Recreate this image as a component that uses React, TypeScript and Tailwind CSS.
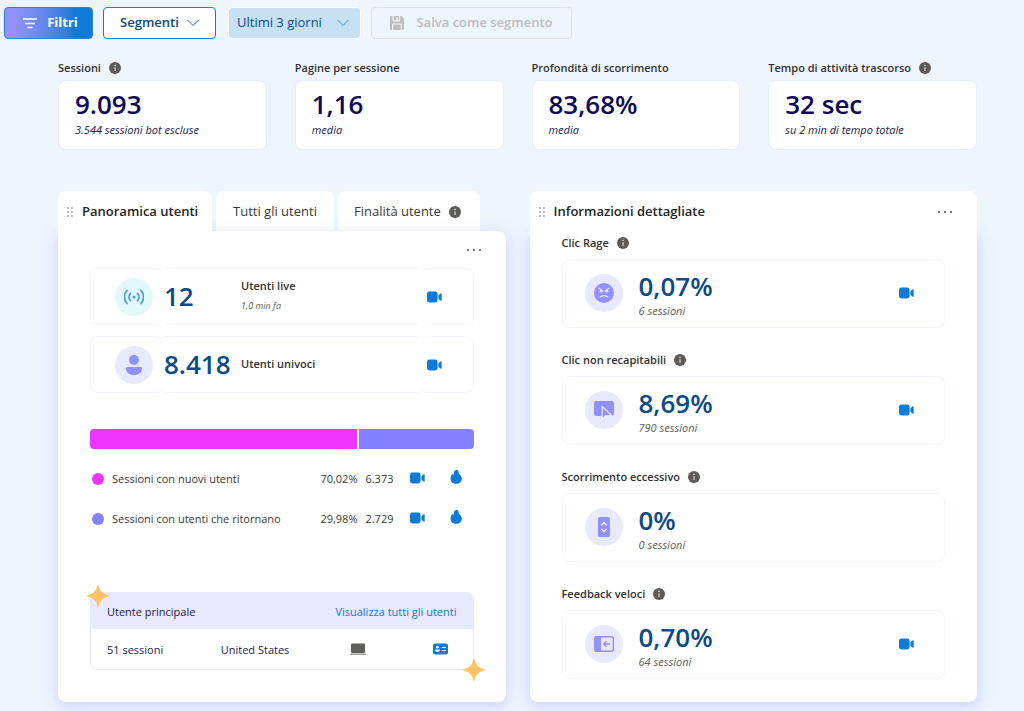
import type { ReactNode } from "react";
import { clsx } from "clsx";

const METRICS = [
  { label: "Sessioni", value: "9.093", note: "3.544 sessioni bot escluse", info: true },
  { label: "Pagine per sessione", value: "1,16", note: "media", info: false },
  { label: "Profondità di scorrimento", value: "83,68%", note: "media", info: false },
  { label: "Tempo di attività trascorso", value: "32 sec", note: "su 2 min di tempo totale", info: true },
];

const SESSION_SPLIT = [
  { label: "Sessioni con nuovi utenti", share: 70.02, count: "6.373", color: "bg-[#ee35ff]" },
  { label: "Sessioni con utenti che ritornano", share: 29.98, count: "2.729", color: "bg-[#8480ff]" },
];

const INSIGHTS = [
  { label: "Clic Rage", value: "0,07%", note: "6 sessioni", icon: <RageIcon />, video: true },
  { label: "Clic non recapitabili", value: "8,69%", note: "790 sessioni", icon: <DeadClickIcon />, video: true },
  { label: "Scorrimento eccessivo", value: "0%", note: "0 sessioni", icon: <ScrollIcon />, video: false },
  { label: "Feedback veloci", value: "0,70%", note: "64 sessioni", icon: <QuickBackIcon />, video: true },
];

function fmtPct(n: number) {
  return `${n.toFixed(2).replace(".", ",")}%`;
}

function InfoIcon() {
  return (
    <svg viewBox="0 0 12 12" className="size-3 shrink-0" aria-hidden="true">
      <circle cx="6" cy="6" r="6" fill="#5d5a58" />
      <circle cx="6" cy="3.4" r="0.8" fill="#d8d8d8" />
      <path d="M6 5.2v3.8" stroke="#d8d8d8" strokeWidth="1.2" />
    </svg>
  );
}

function ChevronDown({ className }: { className?: string }) {
  return (
    <svg viewBox="0 0 12 8" className={clsx("h-2 w-3", className)} fill="none" aria-hidden="true">
      <path d="M0.5 1 6 6.5 11.5 1" stroke="currentColor" strokeWidth="0.9" />
    </svg>
  );
}

function FilterIcon() {
  return (
    <svg viewBox="0 0 14 12" className="h-3 w-3.5" fill="none" aria-hidden="true">
      <path d="M0 2h14M2 6.500h10M4.500 10.500h5" stroke="#fff" strokeWidth="1.500" />
    </svg>
  );
}

function SaveIcon() {
  return (
    <svg viewBox="0 0 14 14" className="size-3.5" aria-hidden="true">
      <path
        fill="currentColor"
        d="M0 1.2C0 .5.5 0 1.2 0H2.6v4.8c0 .5.3.8.8.8h6c.5 0 .8-.3.8-.8V0h1L14 2.6v10.2c0 .7-.5 1.2-1.2 1.2H12V8.4c0-.6-.4-1-1-1H3c-.6 0-1 .4-1 1V14h-.8C.5 14 0 13.5 0 12.8zM4 0h5v4.2H7.8V1H6.4v3.2H4zM3.2 8.6h7.6V14H3.2z"
      />
    </svg>
  );
}

function GripIcon() {
  return (
    <svg viewBox="0 0 8 12" className="h-3 w-2 shrink-0" fill="#bdbbb9" aria-hidden="true">
      {[1, 5, 9].map((y) => (
        <g key={y}>
          <rect x="1" y={y} width="2" height="2" />
          <rect x="5" y={y} width="2" height="2" />
        </g>
      ))}
    </svg>
  );
}

function VideoButton() {
  return (
    <button type="button" aria-label="Registrazioni" className="block shrink-0">
      <svg viewBox="0 0 15 12" className="h-3 w-[15px]" fill="#0f7bd8">
        <rect x="0" y="0.5" width="10.6" height="11" rx="2.4" />
        <path d="M11.4 4.2 13.8 2.3c.4-.3.9-.1.9.4v6.6c0 .5-.5.7-.9.4L11.4 7.8z" />
      </svg>
    </button>
  );
}

function HeatmapButton() {
  return (
    <button type="button" aria-label="Mappa termica" className="block">
      <svg viewBox="0 0 12 16" className="h-4 w-3" fill="#0f7bd8">
        <path d="M6.600.8C8.200 1.200 8.600 2.600 8.900 4.400c.2 1 2.900 2 2.900 5.300 0 3-2.400 5.100-5.700 5.100S.6 12.700.6 9.700c0-1.900.5-3.400 1.300-4.500.3-.4.7-.2.8.2l.4 1.100c.5-.6.500-1.400.700-2.500C4.200 2.300 4.900.9 6.600.8z" />
      </svg>
    </button>
  );
}

function MoreButton() {
  return (
    <button type="button" aria-label="Altre opzioni" className="block">
      <svg viewBox="0 0 16 4" className="h-1 w-4" fill="#7d7b79">
        <rect x="1" y="1" width="2" height="2" />
        <rect x="7" y="1" width="2" height="2" />
        <rect x="13" y="1" width="2" height="2" />
      </svg>
    </button>
  );
}

function LiveIcon() {
  return (
    <svg viewBox="0 0 20 16" className="h-4 w-5" fill="none" stroke="#4ba0e4" strokeWidth="1.8" strokeLinecap="round">
      <circle cx="10" cy="8" r="1.6" fill="#4ba0e4" stroke="none" />
      <path d="M6.4 4.5a5 5 0 0 0 0 7M13.6 4.5a5 5 0 0 1 0 7M3 1.5a9.5 9.5 0 0 0 0 13M17 1.5a9.5 9.5 0 0 1 0 13" />
    </svg>
  );
}

function PersonIcon() {
  return (
    <svg viewBox="0 0 16 20" className="h-5 w-4" fill="#9290fb">
      <circle cx="8" cy="5" r="5" />
      <path d="M1.5 12h13c.8 0 1.500.6 1.500 1.400C16 17.200 12.800 20 8 20s-8-2.800-8-6.600C0 12.600.7 12 1.500 12z" />
    </svg>
  );
}

function RageIcon() {
  return (
    <svg viewBox="0 0 20 20" className="size-5" fill="none">
      <circle cx="10" cy="10" r="10" fill="#9290fb" />
      <path d="M5 5.2 8.8 8M15 5.2 11.2 8M6 14.4c1.800-2.400 6.200-2.400 8 0" stroke="#e8e8ff" strokeWidth="1.2" strokeLinecap="round" />
      <circle cx="7" cy="8.3" r="1.3" fill="#e8e8ff" />
      <circle cx="13" cy="8.3" r="1.3" fill="#e8e8ff" />
    </svg>
  );
}

function DeadClickIcon() {
  return (
    <svg viewBox="0 0 20 18" className="h-[18px] w-5">
      <rect width="20" height="15" rx="2" fill="#9290fb" />
      <path d="M8.200 5.500v12.500l3.600-3.500h6z" fill="#9290fb" stroke="#e8e8ff" strokeWidth="1.2" strokeLinejoin="round" />
    </svg>
  );
}

function ScrollIcon() {
  return (
    <svg viewBox="0 0 12 20" className="h-5 w-3" fill="none">
      <rect width="12" height="20" rx="2" fill="#9290fb" />
      <path d="M3.3 8.3 6 5.7l2.7 2.6M3.3 12 6 14.6 8.7 12" stroke="#fff" strokeWidth="1.2" />
    </svg>
  );
}

function QuickBackIcon() {
  return (
    <svg viewBox="0 0 20 16" className="h-4 w-5" fill="none">
      <rect x="0.7" y="0.7" width="18.6" height="14.6" rx="2" stroke="#9290fb" strokeWidth="1.4" />
      <path d="M2 .5h5v15H2C1 15.500.5 15 .5 14V2C.5 1 1 .5 2 .5z" fill="#9290fb" />
      <path d="M16 8h-6M12.5 5.3 9.8 8l2.7 2.7" stroke="#9290fb" strokeWidth="1.5" />
    </svg>
  );
}

function LaptopIcon() {
  return (
    <svg viewBox="0 0 16 12" className="mx-auto h-3 w-4" role="img" aria-label="PC">
      <rect x="1" y="0.5" width="14" height="9.5" rx="1.2" fill="#605e5c" />
      <rect x="0" y="10.5" width="16" height="1.2" rx="0.5" fill="#8a8886" />
    </svg>
  );
}

function ContactIcon() {
  return (
    <svg viewBox="0 0 15 12" className="h-3 w-[15px]">
      <rect y="0.5" width="15" height="11" rx="2" fill="#0f7bd8" />
      <circle cx="4.5" cy="4.2" r="1.4" fill="#fff" />
      <path d="M2.2 6.500h4.600v.8c0 1-.9 1.600-2.300 1.600s-2.300-.6-2.300-1.600z" fill="#fff" />
      <path d="M8.800 4.500h4M8.800 7.500h4" stroke="#fff" />
    </svg>
  );
}

function Sparkle({ className }: { className: string }) {
  return (
    <svg viewBox="0 0 24 24" className={clsx("absolute size-6", className)} fill="#ffc166" aria-hidden="true">
      <path d="M12 0c2 7 3.500 9.500 12 12-8.500 2-10 4.500-12 12-2-7.500-3.500-10-12-12C8.500 9.500 10 7 12 0z" />
    </svg>
  );
}

function IconCircle({ tint, children }: { tint: string; children: ReactNode }) {
  return (
    <span className={clsx("flex size-[38px] shrink-0 items-center justify-center rounded-full", tint)}>
      {children}
    </span>
  );
}

function UserRow({ icon, tint, value, label, note }: {
  icon: ReactNode;
  tint: string;
  value: string;
  label: string;
  note?: string;
}) {
  return (
    <div className="flex h-[57px]">
      <div className="flex w-[74px] items-center rounded-lg border border-[#f1f6fd] border-r-transparent pl-6">
        <IconCircle tint={tint}>{icon}</IconCircle>
      </div>
      <div className="flex flex-1 items-center border-y border-[#f1f6fd] pb-0.5">
        <span className="w-[77px] text-[26px] leading-8 font-semibold text-[#0b4a86]">{value}</span>
        <div>
          <p className="text-[11px] leading-5 font-semibold text-[#323130]">{label}</p>
          {note && <p className="text-[9px] leading-5 text-[#605e5c] italic">{note}</p>}
        </div>
      </div>
      <div className="flex w-[54px] items-center rounded-lg border border-[#f1f6fd] border-l-transparent pl-1.5">
        <VideoButton />
      </div>
    </div>
  );
}

function Toolbar() {
  return (
    <header className="flex items-center gap-2.5 pt-[7px] pl-1">
      <button
        type="button"
        className="flex h-8 w-[89px] items-center justify-center gap-2.5 rounded border border-[#2b7fdc] bg-linear-to-r from-[#9292ff] from-10% to-[#0f7bd8] to-80% pl-1 text-[13px] font-bold text-white"
      >
        <FilterIcon />
        Filtri
      </button>
      <button
        type="button"
        className="flex h-8 w-[113px] items-center justify-center gap-2 rounded border border-[#0f7bd8] bg-white text-[13px] font-semibold text-[#0b4a86]"
      >
        Segmenti
        <ChevronDown />
      </button>
      <div className="relative ml-0.5">
        <select
          aria-label="Intervallo di date"
          className="h-8 w-[133px] appearance-none rounded border border-white bg-[#c7e0f4] pl-2 text-[13px] text-[#0b4a86]"
        >
          <option>Ultimi 3 giorni</option>
        </select>
        <ChevronDown className="pointer-events-none absolute top-3 right-3 text-[#2b88d8]" />
      </div>
      <button
        type="button"
        disabled
        className="flex h-8 w-[201px] items-center justify-center gap-3 rounded border border-[#e1e1e1] text-[13px] font-semibold text-[#bdbcc0]"
      >
        <SaveIcon />
        Salva come segmento
      </button>
    </header>
  );
}

function UserOverview() {
  return (
    <section className="flex flex-col">
      <div className="flex h-10 gap-1" role="tablist">
        <button
          type="button"
          role="tab"
          aria-selected="true"
          className="relative z-10 flex w-[154px] items-center gap-2 rounded-t-lg bg-white pt-0.5 pl-2 text-[13px] font-semibold text-[#242424]"
        >
          <GripIcon />
          Panoramica utenti
        </button>
        <button
          type="button"
          role="tab"
          aria-selected="false"
          className="w-[118px] rounded-t-lg bg-white pt-0.5 text-[13px] text-[#3b3a39]"
        >
          Tutti gli utenti
        </button>
        <button
          type="button"
          role="tab"
          aria-selected="false"
          className="flex w-[142px] items-center gap-2 rounded-t-lg bg-white pt-0.5 pl-4 text-[13px] text-[#3b3a39]"
        >
          Finalità utente
          <InfoIcon />
        </button>
      </div>

      <div className="relative flex-1 rounded-lg rounded-tl-none bg-white px-8 pb-8 shadow-[0_4px_16px_rgba(120,120,255,0.3)]">
        <div className="-mr-2 flex h-[37px] items-center justify-end">
          <MoreButton />
        </div>
        <div className="flex flex-col gap-[11px]">
          <UserRow icon={<LiveIcon />} tint="bg-[#e2f8fb]" value="12" label="Utenti live" note="1,0 min fa" />
          <UserRow icon={<PersonIcon />} tint="bg-[#e8e8ff]" value="8.418" label="Utenti univoci" />
        </div>

        <div className="mt-9 flex h-5 gap-0.5 overflow-hidden rounded">
          {SESSION_SPLIT.map((s) => (
            <div key={s.label} className={s.color} style={{ width: `${s.share}%` }} />
          ))}
        </div>
        <table className="mt-2.5 w-full text-[11px] text-[#3b3a39]">
          <tbody>
            {SESSION_SPLIT.map((s) => (
              <tr key={s.label} className="h-10">
                <td>
                  <span className="flex items-center gap-2 pl-0.5">
                    <span className={clsx("size-3 rounded-full", s.color)} />
                    {s.label}
                  </span>
                </td>
                <td className="w-[54px] text-right">{fmtPct(s.share)}</td>
                <td className="w-9 text-right">{s.count}</td>
                <td className="w-12 pb-0.5 pl-4">
                  <VideoButton />
                </td>
                <td className="w-8 pb-1 pl-2">
                  <HeatmapButton />
                </td>
              </tr>
            ))}
          </tbody>
        </table>

        <div className="relative mt-[53px]">
          <div className="overflow-hidden rounded-lg border border-[#e8e8ff]">
            <table className="w-full table-fixed text-left text-[11px] text-[#1b1a4e]">
              <colgroup>
                <col className="w-[34%]" />
                <col className="w-[23%]" />
                <col className="w-[26%]" />
                <col className="w-[17%]" />
              </colgroup>
              <thead>
                <tr className="h-9 bg-[#e8e8ff]">
                  <th colSpan={2} className="pt-0.5 pl-4 font-normal">Utente principale</th>
                  <th colSpan={2} className="pt-0.5 pr-4 text-right font-normal">
                    <a href="#utenti" className="text-[#0f7bd8]">Visualizza tutti gli utenti</a>
                  </th>
                </tr>
              </thead>
              <tbody>
                <tr className="h-10 font-medium">
                  <td className="pt-0.5 pl-4">51 sessioni</td>
                  <td className="pt-0.5">United States</td>
                  <td>
                    <LaptopIcon />
                  </td>
                  <td>
                    <button type="button" aria-label="Profilo utente" className="mx-auto block">
                      <ContactIcon />
                    </button>
                  </td>
                </tr>
              </tbody>
            </table>
          </div>
          <Sparkle className="-top-2 -left-1" />
          <Sparkle className="-right-3 -bottom-3" />
        </div>
      </div>
    </section>
  );
}

function Insights() {
  return (
    <section className="flex flex-col">
      <div className="relative z-10 flex h-10 items-center gap-2 rounded-t-lg bg-white pt-0.5 pr-6 pl-2">
        <GripIcon />
        <h2 className="flex-1 text-[13px] font-semibold text-[#242424]">Informazioni dettagliate</h2>
        <MoreButton />
      </div>
      <div className="flex flex-1 flex-col gap-[22px] rounded-b-lg bg-white px-8 pt-0.5 pb-[23px] shadow-[0_4px_16px_rgba(120,120,255,0.3)]">
        {INSIGHTS.map((item) => (
          <div key={item.label}>
            <h3 className="mb-1.5 flex items-center gap-2 text-[11px] leading-5 font-semibold text-[#323130]">
              {item.label}
              <InfoIcon />
            </h3>
            <div className="flex h-[69px] items-center gap-4 rounded-lg border border-[#f1f6fd] pr-[30px] pb-0.5 pl-[22px]">
              <IconCircle tint="bg-[#e8e8ff]">{item.icon}</IconCircle>
              <div className="flex-1 pt-1">
                <p className="text-[26px] leading-8 font-semibold text-[#0b4a86]">{item.value}</p>
                <p className="text-[11px] leading-[18px] text-[#605e5c] italic">{item.note}</p>
              </div>
              {item.video && <VideoButton />}
            </div>
          </div>
        ))}
      </div>
    </section>
  );
}

export default function App() {
  return (
    <div className="min-h-screen bg-[#eef5fd] font-['Open_Sans',sans-serif]">
      <Toolbar />
      <main className="pt-[19px] pr-[47px] pb-[9px] pl-[58px]">
        <div className="grid grid-cols-4 gap-7">
          {METRICS.map((m) => (
            <section key={m.label}>
              <h3 className="mb-0.5 flex items-center gap-2 text-[11px] leading-5 font-semibold whitespace-nowrap text-[#323130]">
                {m.label}
                {m.info && <InfoIcon />}
              </h3>
              <div className="rounded-lg border border-[#e8ecff] bg-white px-4 pt-[7px] pb-[9px]">
                <p className="text-[26px] leading-8 font-semibold text-[#0d0858]">{m.value}</p>
                <p className="text-[11px] leading-5 text-[#1b1a4e] italic">{m.note}</p>
              </div>
            </section>
          ))}
        </div>
        <div className="mt-[41px] grid grid-cols-2 gap-6">
          <UserOverview />
          <Insights />
        </div>
      </main>
    </div>
  );
}
